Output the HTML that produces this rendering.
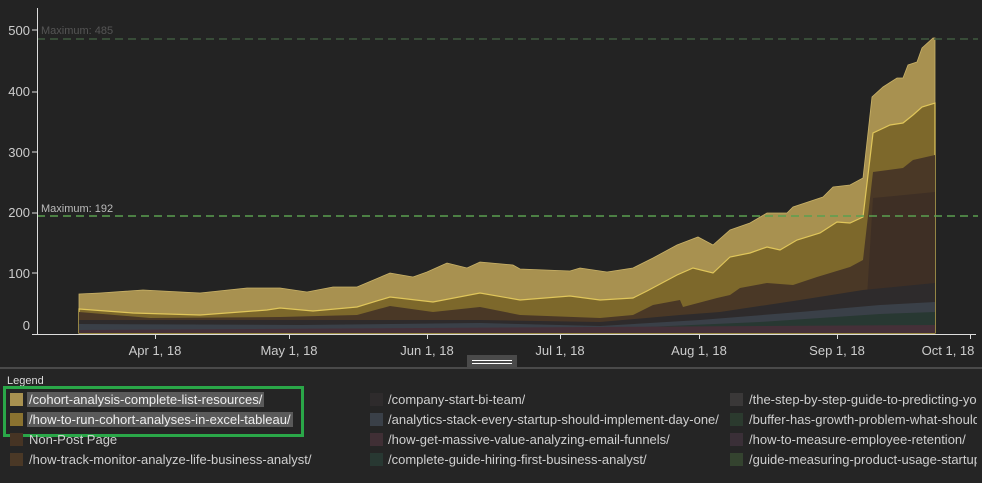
<!DOCTYPE html>
<html><head><meta charset="utf-8"><style>
body{margin:0;width:982px;height:481px;background:#232323;overflow:hidden;font-family:"Liberation Sans",sans-serif;}
svg{position:absolute;left:0;top:0}
.lg{position:absolute;left:0;top:367px;width:982px;height:114px;background:#252525;border-top:2px solid #4a4a4a}
.it{position:absolute;font-size:13px;color:#cfcfcf;white-space:nowrap;height:16px;line-height:16px;overflow:hidden}
.sw{position:absolute;width:13px;height:13px}
.hl{background:#5a5a5a;color:#eee;padding:0 2px}
</style></head><body>
<svg width="982" height="368" viewBox="0 0 982 368">
<path fill="#a89150" stroke="#c9b268" stroke-width="0.8" d="M79,294 L100,293 L143,290 L200,293 L247,288 L280,288 L307,292 L333,287 L357,287 L390,273 L413,277 L427,272 L447,263 L467,268 L480,262 L513,265 L520,269 L570,271 L580,268 L607,272 L633,268 L653,258 L677,245 L698,237 L713,245 L730,230 L750,223 L767,213 L787,213 L793,207 L823,197 L833,187 L850,185 L863,178 L872,97 L883,87 L897,78 L903,78 L908,65 L917,62 L922,48 L933,38 L935,38 L935,333 L79,333 Z"/>
<path fill="#7d682b" stroke="#e0c65a" stroke-width="1.2" d="M79,309 L133,313 L200,315 L267,310 L280,308 L313,311 L357,307 L390,297 L433,302 L480,293 L520,300 L570,296 L600,300 L633,298 L647,291 L677,275 L693,268 L713,273 L730,257 L750,253 L767,247 L780,250 L797,240 L820,233 L837,222 L850,223 L863,217 L873,133 L890,125 L903,123 L913,115 L922,107 L935,103 L935,333 L79,333 Z"/>
<path fill="#4a3826" d="M79,312 L150,318 L280,317 L357,315 L390,306 L433,312 L480,307 L520,315 L600,318 L633,315 L653,305 L680,300 L683,307 L717,298 L730,295 L740,288 L767,283 L793,285 L817,277 L850,267 L863,260 L873,172 L903,168 L913,160 L935,155 L935,333 L79,333 Z"/>
<path fill="#3e2f25" d="M865,330 L873,198 L935,192 L935,333 Z"/>
<path fill="#2e2b2c" d="M79,320 L280,320 L480,320 L600,322 L680,315 L720,312 L800,300 L863,290 L935,283 L935,333 L79,333 Z"/>
<path fill="#3a4048" d="M79,324 L300,325 L480,323 L600,326 L700,320 L800,312 L880,305 L935,302 L935,333 L79,333 Z"/>
<path fill="#283832" d="M300,329 L600,329 L760,322 L880,314 L935,312 L935,333 L300,333 Z"/>
<path fill="#453038" d="M79,330 L935,325 L935,333 L79,333 Z"/>
<line x1="37" y1="39" x2="978" y2="39" stroke="#3f5a3f" stroke-width="1.5" stroke-dasharray="8,5"/>
<line x1="37" y1="216" x2="978" y2="216" stroke="#5aa050" stroke-width="1.5" stroke-dasharray="8,5"/>
<text x="41" y="34" font-size="11" fill="#555" font-family="Liberation Sans">Maximum: 485</text>
<text x="41" y="212" font-size="11" fill="#bbb" font-family="Liberation Sans">Maximum: 192</text>
<line x1="37.5" y1="8" x2="37.5" y2="334" stroke="#ddd" stroke-width="1"/>
<line x1="32" y1="334.5" x2="976" y2="334.5" stroke="#ddd" stroke-width="1"/>
<g stroke="#ddd"><line x1="32" y1="30" x2="37" y2="30"/><line x1="32" y1="92" x2="37" y2="92"/><line x1="32" y1="152" x2="37" y2="152"/><line x1="32" y1="213" x2="37" y2="213"/><line x1="32" y1="273" x2="37" y2="273"/>
<line x1="155.5" y1="334" x2="155.5" y2="339"/><line x1="289.5" y1="334" x2="289.5" y2="339"/><line x1="427.5" y1="334" x2="427.5" y2="339"/><line x1="560.5" y1="334" x2="560.5" y2="339"/><line x1="699.5" y1="334" x2="699.5" y2="339"/><line x1="837.5" y1="334" x2="837.5" y2="339"/><line x1="970.5" y1="334" x2="970.5" y2="339"/></g>
<g font-size="13" fill="#ccc" font-family="Liberation Sans" text-anchor="end"><text x="30" y="35">500</text><text x="30" y="96">400</text><text x="30" y="157">300</text><text x="30" y="217">200</text><text x="30" y="278">100</text><text x="30" y="330">0</text></g>
<g font-size="13" fill="#ccc" font-family="Liberation Sans" text-anchor="middle"><text x="155" y="355">Apr 1, 18</text><text x="289" y="355">May 1, 18</text><text x="427" y="355">Jun 1, 18</text><text x="560" y="355">Jul 1, 18</text><text x="699" y="355">Aug 1, 18</text><text x="837" y="355">Sep 1, 18</text><text x="948" y="355">Oct 1, 18</text></g>
<rect x="467" y="355" width="50" height="12" fill="#4a4a4a"/>
<line x1="472" y1="360.5" x2="512" y2="360.5" stroke="#fff"/><line x1="472" y1="363.5" x2="512" y2="363.5" stroke="#fff"/>
</svg>
<div class="lg"></div>
<div class="it" style="left:7px;top:373px;font-size:11px;color:#ddd">Legend</div>
<div style="position:absolute;left:3px;top:386px;width:295px;height:45px;border:3px solid #2aa748"></div>
<div class="sw" style="left:10px;top:393px;background:#a89150"></div><div class="it" style="left:27px;top:392px"><span class="hl">/cohort-analysis-complete-list-resources/</span></div>
<div class="sw" style="left:10px;top:413px;background:#8a7230"></div><div class="it" style="left:27px;top:412px"><span class="hl">/how-to-run-cohort-analyses-in-excel-tableau/</span></div>
<div class="sw" style="left:10px;top:433px;background:#463424"></div><div class="it" style="left:29px;top:432px">Non-Post Page</div>
<div class="sw" style="left:10px;top:453px;background:#4a3826"></div><div class="it" style="left:29px;top:452px">/how-track-monitor-analyze-life-business-analyst/</div>
<div class="sw" style="left:370px;top:393px;background:#2e2b2c"></div><div class="it" style="left:388px;top:392px">/company-start-bi-team/</div>
<div class="sw" style="left:370px;top:413px;background:#3a4048"></div><div class="it" style="left:388px;top:412px">/analytics-stack-every-startup-should-implement-day-one/</div>
<div class="sw" style="left:370px;top:433px;background:#402f35"></div><div class="it" style="left:388px;top:432px">/how-get-massive-value-analyzing-email-funnels/</div>
<div class="sw" style="left:370px;top:453px;background:#283832"></div><div class="it" style="left:388px;top:452px">/complete-guide-hiring-first-business-analyst/</div>
<div class="sw" style="left:730px;top:393px;background:#3a3838"></div><div class="it" style="left:749px;top:392px;width:228px">/the-step-by-step-guide-to-predicting-your</div>
<div class="sw" style="left:730px;top:413px;background:#2b3a2e"></div><div class="it" style="left:749px;top:412px;width:228px">/buffer-has-growth-problem-what-should</div>
<div class="sw" style="left:730px;top:433px;background:#3a2f37"></div><div class="it" style="left:749px;top:432px;width:228px">/how-to-measure-employee-retention/</div>
<div class="sw" style="left:730px;top:453px;background:#34432f"></div><div class="it" style="left:749px;top:452px;width:228px">/guide-measuring-product-usage-startup</div>
</body></html>
